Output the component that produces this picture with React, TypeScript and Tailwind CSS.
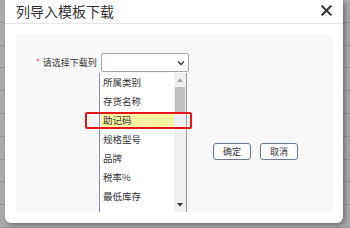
import React from 'react';

const items = ['所属类别', '存货名称', '助记码', '规格型号', '品牌', '税率%', '最低库存'];

export default function App() {
  return (
    <div
      className="w-[350px] h-[228px] overflow-hidden bg-[#a9a9a9] relative"
      style={{ fontFamily: '"Noto Sans CJK SC", "Noto Sans", sans-serif' }}
    >
      {/* backdrop table lines */}
      <div className="absolute inset-0 flex flex-col">
        {Array.from({ length: 10 }).map((_, i) => (
          <div key={i} className="h-[23px] border-b border-[#959595]" />
        ))}
      </div>

      <div className="relative ml-[5px] w-[338px] h-[223px] bg-white rounded-b-[6px] shadow-[2px_2px_4px_rgba(0,0,0,0.35)] flex flex-col">
        {/* header */}
        <div className="h-[24px] flex items-center justify-between pl-[11px] pr-[11px] border-b border-[#e6e6e6]">
          <span className="text-[14px] leading-none text-[#333] -mt-[2px] whitespace-nowrap">列导入模板下载</span>
          <svg width="11" height="11" viewBox="0 0 12 12" className="-mt-[2px]">
            <path d="M1.5 1.5 L10.5 10.5 M10.5 1.5 L1.5 10.5" stroke="#333" strokeWidth="2.2" strokeLinecap="square" />
          </svg>
        </div>

        {/* body panel */}
        <div className="relative mt-[11px] ml-[11px] w-[317px] h-[177px] bg-[#f8f8f8]">
          <div className="flex items-center pt-[18px] pl-[20px]">
            <span className="text-[#e33] text-[8px] mr-[3px] -mt-[2px]">*</span>
            <span className="text-[9px] text-[#333] w-[58px] whitespace-nowrap">请选择下载列</span>
            <div className="w-[88px] h-[19px] bg-white border border-[#a6a6a6] rounded-[2px] flex items-center justify-end pr-[3px]">
              <svg width="8" height="6" viewBox="0 0 8 6">
                <path d="M1 1.5 L4 4.5 L7 1.5" stroke="#333" strokeWidth="1.3" fill="none" />
              </svg>
            </div>
          </div>

          <div className="flex gap-[9px] mt-[71px] ml-[197px]">
            <button className="w-[38px] h-[17px] bg-white border border-[#6b7b8c] rounded-[3px] text-[9px] leading-none text-[#333]">
              确定
            </button>
            <button className="w-[38px] h-[17px] bg-white border border-[#6b7b8c] rounded-[3px] text-[9px] leading-none text-[#333]">
              取消
            </button>
          </div>

          {/* open dropdown list */}
          <div className="absolute left-[83px] top-[38px] w-[88px] h-[139px] bg-white border-l border-[#8a86b0] border-r border-r-[#9a9a9a] flex">
            <div className="flex-1 flex flex-col pl-[1px]">
              {items.map((t) => (
                <div key={t} className="h-[19px] flex items-center">
                  <span
                    className={`w-full h-[14px] flex items-center pl-[2px] text-[9.5px] text-[#333] whitespace-nowrap ${
                      t === '助记码' ? 'bg-[#fdf6a3]' : ''
                    }`}
                  >
                    {t}
                  </span>
                </div>
              ))}
            </div>
            <div className="w-[12px] bg-[#f0f0f0] flex flex-col items-center">
              <div className="h-[14px] flex items-center justify-center">
                <svg width="6" height="4" viewBox="0 0 6 4">
                  <path d="M0 4 L3 0.5 L6 4 Z" fill="#a0a0a0" />
                </svg>
              </div>
              <div className="w-[10px] h-[27px] bg-[#c1c1c1]" />
              <div className="flex-1" />
              <div className="h-[14px] flex items-center justify-center">
                <svg width="6" height="4" viewBox="0 0 6 4">
                  <path d="M0 0 L3 3.5 L6 0 Z" fill="#333" />
                </svg>
              </div>
            </div>
          </div>

          {/* red highlight box */}
          <div className="absolute left-[69px] top-[77px] w-[107px] h-[17px] border-2 border-[#e3161b] rounded-[2px]" />
        </div>
      </div>
    </div>
  );
}
